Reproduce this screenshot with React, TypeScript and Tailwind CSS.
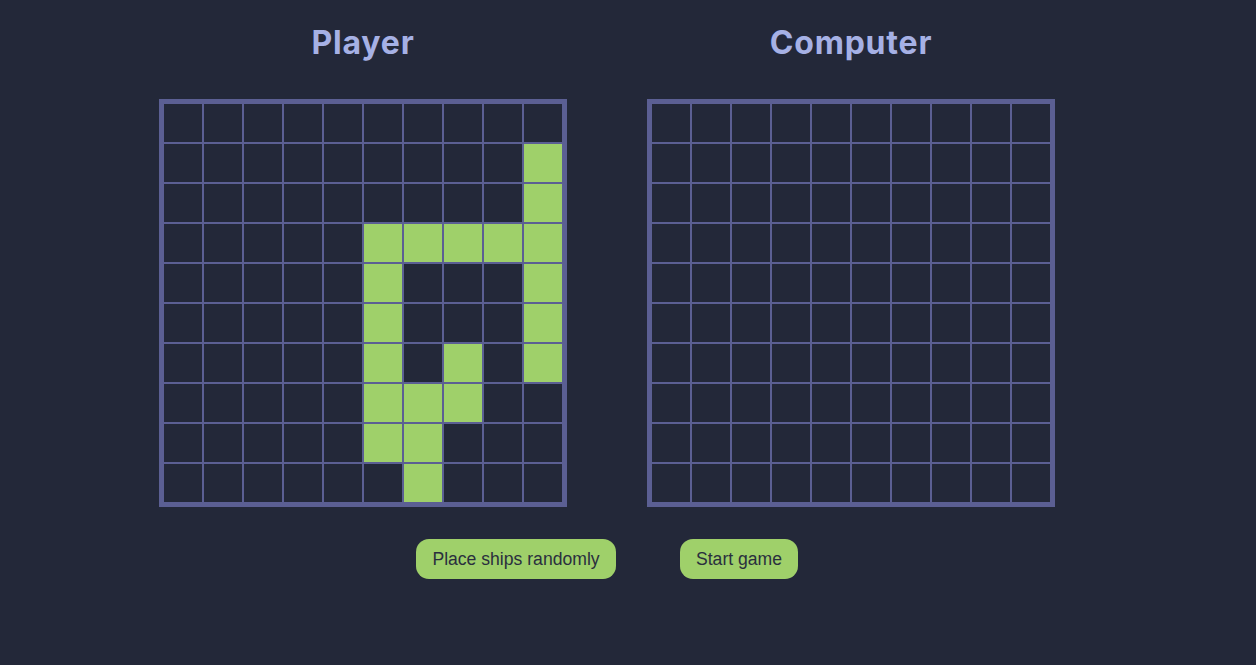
import React from "react";

const ships = new Set<string>([
  "1-9", "2-9", "3-9", "4-9", "5-9", "6-9",
  "3-5", "3-6", "3-7", "3-8",
  "4-5", "5-5", "6-5", "7-5", "8-5",
  "7-6", "8-6", "9-6",
  "6-7", "7-7",
]);

function Board({ title, showShips }: { title: string; showShips: boolean }) {
  const cells = [];
  for (let r = 0; r < 10; r++) {
    for (let c = 0; c < 10; c++) {
      const ship = showShips && ships.has(`${r}-${c}`);
      cells.push(
        <div
          key={`${r}-${c}`}
          className={`h-[40px] w-[40px] border border-[#5b5f93] ${ship ? "bg-[#9fd06a]" : "bg-[#232839]"}`}
        />
      );
    }
  }
  return (
    <div className="flex flex-col items-center">
      <h2
        className="text-[32px] font-bold leading-none text-[#a6b1e5] h-[40px] flex items-center mt-[23px] mb-[36px] tracking-[0.8px]"
        style={{ fontFamily: "Inter, 'Noto Sans', sans-serif" }}
      >
        {title}
      </h2>
      <div className="grid grid-cols-[repeat(10,40px)] border-4 border-[#5b5f93]">{cells}</div>
    </div>
  );
}

export default function App() {
  return (
    <div
      className="min-h-[665px] w-full bg-[#232839] pr-[42px] flex flex-col items-center"
      style={{ fontFamily: "'Liberation Sans', Arial, sans-serif" }}
    >
      <div className="flex gap-[80px]">
        <Board title="Player" showShips={true} />
        <Board title="Computer" showShips={false} />
      </div>
      <div className="flex gap-[64px] mt-[32px]">
        <button className="h-[40px] w-[200px] rounded-[13px] bg-[#9fd06a] text-[17.6px] text-[#2a2f3e]">
          Place ships randomly
        </button>
        <button className="h-[40px] w-[118px] rounded-[13px] bg-[#9fd06a] text-[17.6px] text-[#2a2f3e]">
          Start game
        </button>
      </div>
    </div>
  );
}
